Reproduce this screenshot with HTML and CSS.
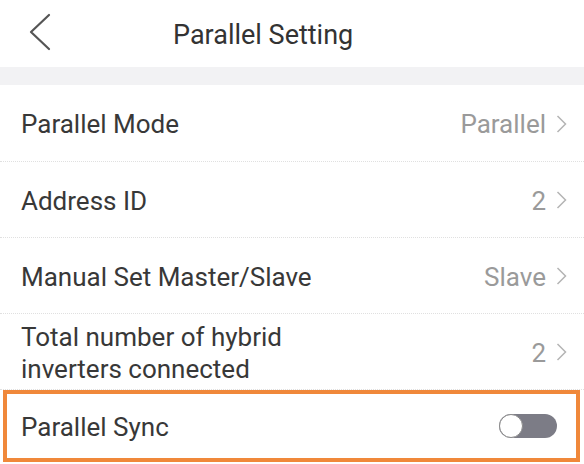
FILE: index.html
```html
<!DOCTYPE html>
<html>
<head>
<meta charset="utf-8">
<link rel="stylesheet" href="styles.css">
</head>
<body>
<div class="screen">
  <header class="topbar">
    <span class="back">
      <svg width="24" height="38" viewBox="0 0 24 38"><path d="M21 2 L3 19 L21 36" fill="none" stroke="#555" stroke-width="2.2" stroke-linecap="round" stroke-linejoin="round"/></svg>
    </span>
    <h1 class="title">Parallel Setting</h1>
  </header>
  <div class="band"></div>
  <ul class="list">
    <li class="row">
      <span class="label">Parallel Mode</span>
      <span class="value">Parallel<span class="chev"><svg width="11" height="18" viewBox="0 0 11 18"><path d="M1.5 1 L9.5 9 L1.5 17" fill="none" stroke="#b4b4b4" stroke-width="1.5"/></svg></span></span>
    </li>
    <li class="row">
      <span class="label">Address ID</span>
      <span class="value">2<span class="chev"><svg width="11" height="18" viewBox="0 0 11 18"><path d="M1.5 1 L9.5 9 L1.5 17" fill="none" stroke="#b4b4b4" stroke-width="1.5"/></svg></span></span>
    </li>
    <li class="row">
      <span class="label">Manual Set Master/Slave</span>
      <span class="value">Slave<span class="chev"><svg width="11" height="18" viewBox="0 0 11 18"><path d="M1.5 1 L9.5 9 L1.5 17" fill="none" stroke="#b4b4b4" stroke-width="1.5"/></svg></span></span>
    </li>
    <li class="row">
      <span class="label two">Total number of hybrid<br>inverters connected</span>
      <span class="value">2<span class="chev"><svg width="11" height="18" viewBox="0 0 11 18"><path d="M1.5 1 L9.5 9 L1.5 17" fill="none" stroke="#b4b4b4" stroke-width="1.5"/></svg></span></span>
    </li>
    <li class="row sync">
      <span class="label">Parallel Sync</span>
      <span class="toggle"><span class="knob"></span></span>
    </li>
  </ul>
</div>
</body>
</html>
```
FILE: styles.css
```css
html, body {
  margin: 0;
  padding: 0;
  background: #ffffff;
}
.screen {
  width: 584px;
  height: 464px;
  overflow: hidden;
  font-family: Roboto, "Liberation Sans", sans-serif;
  color: #333333;
}
.topbar {
  height: 67px;
  display: flex;
  align-items: center;
}
.back {
  width: 24px;
  height: 38px;
  margin-left: 28px;
  margin-top: -3px;
  display: flex;
}
.title {
  margin: 0 0 0 121px;
  font-size: 27px;
  font-weight: 400;
  color: #333;
  margin-top: 2px;
}
.band {
  height: 18px;
  background: #f2f2f4;
}
.list {
  list-style: none;
  margin: 0;
  padding: 0;
}
.row {
  height: 76px;
  display: flex;
  align-items: center;
  justify-content: space-between;
  padding: 0 17px 0 21px;
  border-bottom: 1px dotted #e0e0e0;
  box-sizing: border-box;
  font-size: 26px;
}
.row:first-child { height: 77px; }
.row > .label { margin-top: 2px; }
.label {
  color: #383838;
}
.label.two {
  line-height: 32px;
}
.value {
  color: #9a9a9a;
  display: flex;
  align-items: center;
  margin-top: 2px;
}
.chev {
  display: flex;
  margin-left: 10px;
  margin-top: -1px;
}
.row.sync {
  border: 4px solid #f0883a;
  margin: 0 4px 0 3px;
  height: 72px;
  padding: 0 19px 0 14px;
}
.toggle {
  width: 58px;
  height: 24px;
  border-radius: 12px;
  background: #7c7c86;
  position: relative;
}
.knob {
  position: absolute;
  left: 0;
  top: 0;
  width: 24px;
  height: 24px;
  box-sizing: border-box;
  border-radius: 50%;
  background: #fff;
  border: 1.5px solid #8a8a8a;
}
```
